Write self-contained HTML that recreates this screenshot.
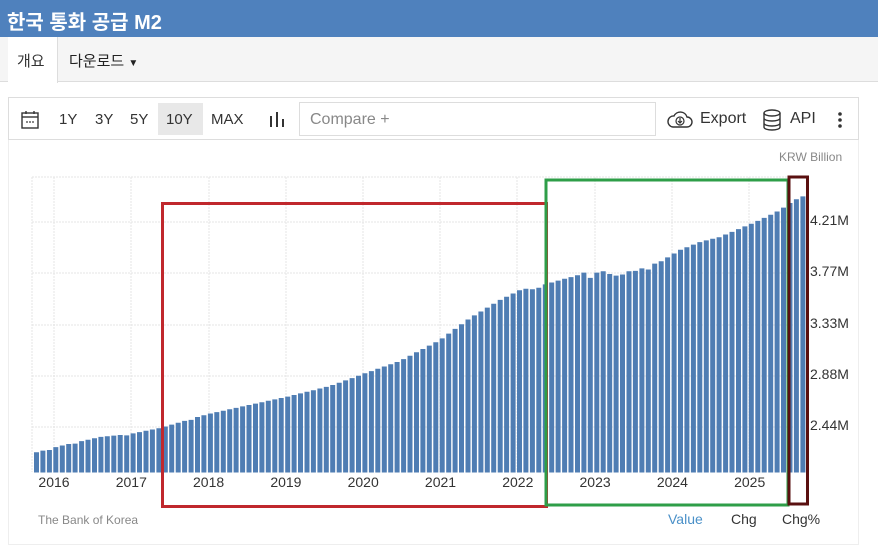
<!DOCTYPE html>
<html><head><meta charset="utf-8"><style>
*{margin:0;padding:0;box-sizing:border-box}
body{width:878px;height:551px;overflow:hidden;background:#fff;font-family:"Liberation Sans","Noto Sans CJK KR",sans-serif;position:relative}
.title{position:absolute;left:0;top:0;width:878px;height:37px;background:#4f81bd;color:#fff;font-size:20px;font-weight:bold;padding:6px 0 0 7px}
.tabs{position:absolute;left:0;top:37px;width:878px;height:45px;background:#f5f5f5;border-bottom:1px solid #ddd}
.tab1{position:absolute;left:8px;top:0;width:50px;height:46px;background:#fff;border-right:1px solid #ddd;font-size:15px;padding:13px 0 0 9px;color:#333}
.tab2{position:absolute;left:69px;top:13px;font-size:15px;color:#222}
.panel{position:absolute;left:8px;top:97px;width:851px;height:448px;border:1px solid #eee}
.tb{position:absolute;left:8px;top:97px;width:851px;height:43px;border:1px solid #ddd;background:#fff}
.sel{position:absolute;left:158px;top:103px;width:45px;height:32px;background:#e8e8e8}
.cmp{position:absolute;left:299px;top:102px;width:357px;height:34px;border:1px solid #ddd;font-size:16px;color:#888;padding:8px 10px}
.t{position:absolute;font-size:14px;color:#333}
</style></head><body>
<div class="title">한국 통화 공급 M2</div>
<div class="tabs"><div class="tab1">개요</div><div class="tab2">다운로드 <span style="font-size:10px">▼</span></div></div>
<div class="panel"></div>
<div class="tb"></div>
<div class="sel"></div>
<svg style="position:absolute;left:20px;top:110px" width="20" height="20" viewBox="0 0 20 20"><rect x="2" y="3" width="16" height="15" fill="none" stroke="#333" stroke-width="1.4"/><line x1="2" y1="7" x2="18" y2="7" stroke="#333" stroke-width="1.4"/><line x1="6" y1="1" x2="6" y2="4" stroke="#333" stroke-width="1.4"/><line x1="14" y1="1" x2="14" y2="4" stroke="#333" stroke-width="1.4"/><circle cx="7" cy="12" r=".9" fill="#333"/><circle cx="10" cy="12" r=".9" fill="#333"/><circle cx="13" cy="12" r=".9" fill="#333"/></svg>
<span class="t" style="left:59px;top:111px;font-size:15px">1Y</span>
<span class="t" style="left:95px;top:111px;font-size:15px">3Y</span>
<span class="t" style="left:130px;top:111px;font-size:15px">5Y</span>
<span class="t" style="left:166px;top:111px;font-size:15px">10Y</span>
<span class="t" style="left:211px;top:111px;font-size:15px">MAX</span>
<svg style="position:absolute;left:268px;top:110px" width="18" height="18"><rect x="2" y="6" width="2" height="11" fill="#333"/><rect x="8" y="2" width="2" height="15" fill="#333"/><rect x="14" y="9" width="2" height="8" fill="#333"/></svg>
<div class="cmp">Compare +</div>
<svg style="position:absolute;left:666px;top:108px" width="28" height="24" viewBox="0 0 28 24"><path d="M7 19 H21 a5 5 0 0 0 0-10 a7 7 0 0 0-13-1 a5.5 5.5 0 0 0-1 11z" fill="none" stroke="#333" stroke-width="1.4"/><circle cx="14" cy="13" r="4" fill="none" stroke="#333" stroke-width="1.2"/><path d="M14 10v5m-2-2l2 2 2-2" stroke="#333" stroke-width="1.2" fill="none"/></svg>
<span class="t" style="left:700px;top:110px;font-size:16px">Export</span>
<svg style="position:absolute;left:762px;top:108px" width="20" height="24" viewBox="0 0 20 24"><ellipse cx="10" cy="5" rx="8" ry="3" fill="none" stroke="#333" stroke-width="1.4"/><path d="M2 5v14c0 4 16 4 16 0V5M2 10c0 4 16 4 16 0M2 15c0 4 16 4 16 0" fill="none" stroke="#333" stroke-width="1.4"/></svg>
<span class="t" style="left:790px;top:110px;font-size:16px">API</span>
<svg style="position:absolute;left:836px;top:110px" width="8" height="20"><circle cx="4" cy="4" r="1.8" fill="#333"/><circle cx="4" cy="10" r="1.8" fill="#333"/><circle cx="4" cy="16" r="1.8" fill="#333"/></svg>
<span class="t" style="left:779px;top:150px;font-size:12px;color:#888">KRW Billion</span>
<svg style="position:absolute;left:0;top:0" width="878" height="551">
<g stroke="#e4e4e4" stroke-dasharray="2,1">
<line x1="32" y1="177" x2="808" y2="177"/><line x1="32" y1="222" x2="808" y2="222"/><line x1="32" y1="273" x2="808" y2="273"/><line x1="32" y1="325" x2="808" y2="325"/><line x1="32" y1="376" x2="808" y2="376"/><line x1="32" y1="427" x2="808" y2="427"/>
<line x1="32" y1="177" x2="32" y2="472"/><line x1="54" y1="177" x2="54" y2="472"/><line x1="131" y1="177" x2="131" y2="472"/><line x1="209" y1="177" x2="209" y2="472"/><line x1="286" y1="177" x2="286" y2="472"/><line x1="363" y1="177" x2="363" y2="472"/><line x1="440" y1="177" x2="440" y2="472"/><line x1="517" y1="177" x2="517" y2="472"/><line x1="595" y1="177" x2="595" y2="472"/><line x1="672" y1="177" x2="672" y2="472"/><line x1="749" y1="177" x2="749" y2="472"/>
</g>
<path fill="#4f7db3" d="M34 472.5V452.3h5V472.5zM40.4 472.5V450.6h5V472.5zM46.9 472.5V450h5V472.5zM53.3 472.5V447.1h5V472.5zM59.8 472.5V445.5h5V472.5zM66.2 472.5V444h5V472.5zM72.6 472.5V443.6h5V472.5zM79.1 472.5V441.1h5V472.5zM85.5 472.5V439.7h5V472.5zM92 472.5V438.2h5V472.5zM98.4 472.5V436.9h5V472.5zM104.8 472.5V436.3h5V472.5zM111.3 472.5V435.6h5V472.5zM117.7 472.5V435h5V472.5zM124.2 472.5V435.4h5V472.5zM130.6 472.5V433.4h5V472.5zM137 472.5V432.1h5V472.5zM143.5 472.5V430.8h5V472.5zM149.9 472.5V429.5h5V472.5zM156.4 472.5V428.2h5V472.5zM162.8 472.5V426.5h5V472.5zM169.2 472.5V424.6h5V472.5zM175.7 472.5V422.7h5V472.5zM182.1 472.5V420.9h5V472.5zM188.6 472.5V419.9h5V472.5zM195 472.5V417h5V472.5zM201.4 472.5V415.2h5V472.5zM207.9 472.5V413.5h5V472.5zM214.3 472.5V412.1h5V472.5zM220.8 472.5V410.7h5V472.5zM227.2 472.5V409.3h5V472.5zM233.6 472.5V407.9h5V472.5zM240.1 472.5V406.4h5V472.5zM246.5 472.5V405h5V472.5zM253 472.5V403.6h5V472.5zM259.4 472.5V402.2h5V472.5zM265.8 472.5V400.8h5V472.5zM272.3 472.5V399.4h5V472.5zM278.7 472.5V398h5V472.5zM285.2 472.5V396.6h5V472.5zM291.6 472.5V395h5V472.5zM298 472.5V393.4h5V472.5zM304.5 472.5V391.8h5V472.5zM310.9 472.5V390.2h5V472.5zM317.4 472.5V388.5h5V472.5zM323.8 472.5V386.9h5V472.5zM330.2 472.5V385h5V472.5zM336.7 472.5V382.7h5V472.5zM343.1 472.5V380.4h5V472.5zM349.6 472.5V378.1h5V472.5zM356 472.5V375.8h5V472.5zM362.4 472.5V373.3h5V472.5zM368.9 472.5V371.1h5V472.5zM375.3 472.5V368.8h5V472.5zM381.8 472.5V366.5h5V472.5zM388.2 472.5V364.3h5V472.5zM394.6 472.5V362h5V472.5zM401.1 472.5V359.1h5V472.5zM407.5 472.5V355.7h5V472.5zM414 472.5V352.3h5V472.5zM420.4 472.5V349h5V472.5zM426.8 472.5V345.6h5V472.5zM433.3 472.5V342.2h5V472.5zM439.7 472.5V338.4h5V472.5zM446.2 472.5V333.6h5V472.5zM452.6 472.5V328.9h5V472.5zM459 472.5V324.2h5V472.5zM465.5 472.5V319.5h5V472.5zM471.9 472.5V315.4h5V472.5zM478.4 472.5V311.5h5V472.5zM484.8 472.5V307.6h5V472.5zM491.2 472.5V303.8h5V472.5zM497.7 472.5V299.9h5V472.5zM504.1 472.5V296.7h5V472.5zM510.6 472.5V293.5h5V472.5zM517 472.5V290.3h5V472.5zM523.4 472.5V288.7h5V472.5zM529.9 472.5V289.3h5V472.5zM536.3 472.5V287.8h5V472.5zM542.8 472.5V284.4h5V472.5zM549.2 472.5V282.5h5V472.5zM555.6 472.5V280.6h5V472.5zM562.1 472.5V278.8h5V472.5zM568.5 472.5V277.1h5V472.5zM575 472.5V275.3h5V472.5zM581.4 472.5V272.6h5V472.5zM587.8 472.5V277.9h5V472.5zM594.3 472.5V272.6h5V472.5zM600.7 472.5V271.3h5V472.5zM607.2 472.5V274h5V472.5zM613.6 472.5V275.6h5V472.5zM620 472.5V274.5h5V472.5zM626.5 472.5V271.2h5V472.5zM632.9 472.5V270.9h5V472.5zM639.4 472.5V268.4h5V472.5zM645.8 472.5V269.5h5V472.5zM652.2 472.5V263.6h5V472.5zM658.7 472.5V261.3h5V472.5zM665.1 472.5V257.4h5V472.5zM671.6 472.5V253.5h5V472.5zM678 472.5V249.8h5V472.5zM684.4 472.5V247.2h5V472.5zM690.9 472.5V244.6h5V472.5zM697.3 472.5V242.1h5V472.5zM703.8 472.5V240.4h5V472.5zM710.2 472.5V238.8h5V472.5zM716.6 472.5V237.2h5V472.5zM723.1 472.5V234.5h5V472.5zM729.5 472.5V231.9h5V472.5zM736 472.5V229.1h5V472.5zM742.4 472.5V226.4h5V472.5zM748.8 472.5V223.7h5V472.5zM755.3 472.5V220.9h5V472.5zM761.7 472.5V217.9h5V472.5zM768.2 472.5V214.7h5V472.5zM774.6 472.5V211.5h5V472.5zM781 472.5V207.6h5V472.5zM787.5 472.5V203h5V472.5zM793.9 472.5V199.3h5V472.5zM800.4 472.5V196.4h5V472.5z"/>
<g font-size="14" fill="#333" font-family="Liberation Sans" text-anchor="middle">
<text x="54" y="487">2016</text><text x="131.3" y="487">2017</text><text x="208.6" y="487">2018</text><text x="285.9" y="487">2019</text><text x="363.2" y="487">2020</text><text x="440.5" y="487">2021</text><text x="517.8" y="487">2022</text><text x="595.1" y="487">2023</text><text x="672.4" y="487">2024</text><text x="749.7" y="487">2025</text>
</g>
<g font-size="14" fill="#333" font-family="Liberation Sans">
<text x="810" y="225">4.21M</text><text x="810" y="276">3.77M</text><text x="810" y="328">3.33M</text><text x="810" y="379">2.88M</text><text x="810" y="430">2.44M</text>
</g>
<rect x="162.5" y="203.5" width="384" height="303" fill="none" stroke="#c0282d" stroke-width="3"/>
<rect x="546" y="180" width="242" height="325" fill="none" stroke="#2e9e48" stroke-width="3"/>
<rect x="789" y="177" width="18.5" height="327" fill="none" stroke="#5a1010" stroke-width="3"/>
</svg>
<span class="t" style="left:38px;top:513px;font-size:12px;color:#888">The Bank of Korea</span>
<span class="t" style="left:668px;top:511px;color:#4a90c8">Value</span>
<span class="t" style="left:731px;top:511px">Chg</span>
<span class="t" style="left:782px;top:511px">Chg%</span>
</body></html>
